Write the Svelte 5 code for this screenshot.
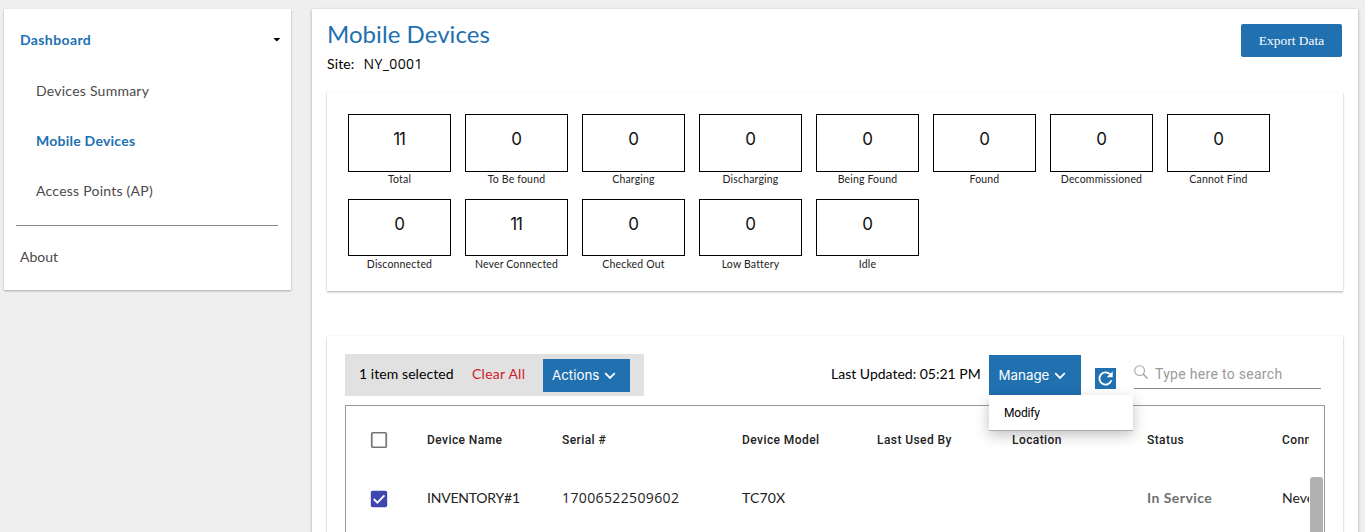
<script>
  const row1 = [['11', 'Total'], ['0', 'To Be found'], ['0', 'Charging'], ['0', 'Discharging'], ['0', 'Being Found'], ['0', 'Found'], ['0', 'Decommissioned'], ['0', 'Cannot Find']];
  const row2 = [['0', 'Disconnected'], ['11', 'Never Connected'], ['0', 'Checked Out'], ['0', 'Low Battery'], ['0', 'Idle']];
  const columns = ['Device Name', 'Serial #', 'Device Model', 'Last Used By', 'Location', 'Status', 'Connection'];
</script>

{#snippet chevron()}
  <svg width="12" height="8" viewBox="0 0 12 8"><path d="M1.2 1.2L6 5.9l4.8-4.7" fill="none" stroke="#fff" stroke-width="1.8" /></svg>
{/snippet}

<div class="page">
  <nav class="sidebar">
    <div class="item top active">Dashboard
      <svg width="8" height="4" viewBox="0 0 8 4"><path d="M0.3 0h7L3.8 3.5z" fill="#000" /></svg>
    </div>
    <div class="item sub">Devices Summary</div>
    <div class="item sub active">Mobile Devices</div>
    <div class="item sub">Access Points (AP)</div>
    <hr />
    <div class="item top about">About</div>
  </nav>

  <main>
    <header>
      <div>
        <h1>Mobile Devices</h1>
        <p class="site"><span class="k">Site:</span><span class="v">NY_0001</span></p>
      </div>
      <button class="export">Export Data</button>
    </header>

    <section class="card stats">
      {#each [row1, row2] as row, i}
        <div class="statrow" class:second={i === 1}>
          {#each row as [n, label]}
            <div class="stat"><div class="box"><span class:narrow={n === '11'}>{n}</span></div><div class="label">{label}</div></div>
          {/each}
        </div>
      {/each}
    </section>

    <section class="card devices">
      <div class="toolbar">
        <div class="selection">
          <span class="count">1 item selected</span>
          <span class="clear">Clear All</span>
          <button class="drop actions">Actions{@render chevron()}</button>
        </div>
        <span class="updated">Last Updated: 05:21 PM</span>
        <div class="manage">
          <button class="drop">Manage{@render chevron()}</button>
          <div class="menu">Modify</div>
        </div>
        <button class="refresh" aria-label="Refresh">
          <svg width="21" height="21" viewBox="0 0 21 21"><path d="M14.9 6.2A6.1 6.1 0 1 0 16.4 12.3" fill="none" stroke="#fff" stroke-width="1.9" /><path d="M17.7 3.3v6h-6z" fill="#fff" /></svg>
        </button>
        <div class="search">
          <svg width="15" height="15" viewBox="0 0 15 15" fill="none" stroke="#a8a8a8"><circle cx="5.6" cy="5.6" r="4.9" stroke-width="1.1" /><path d="M9.3 9.3l4.2 4.2" stroke-width="1.6" /></svg>
          <span>Type here to search</span>
        </div>
      </div>
      <div class="table">
        <div class="grid">
          <div class="tr head">
            <span class="cb"><svg width="18" height="18" viewBox="0 0 18 18"><rect x="1.75" y="1.75" width="14.5" height="14.5" rx="1" fill="none" stroke="#757575" stroke-width="1.7" /></svg></span>
            {#each columns as c}<span>{c}</span>{/each}
          </div>
          <div class="tr">
            <span class="cb"><svg width="18" height="18" viewBox="0 0 18 18"><rect x="0.8" y="0.8" width="16.4" height="16.4" rx="1.8" fill="#3f46ad" /><path d="M3.7 9l3.7 3.7 7-7.4" fill="none" stroke="#fff" stroke-width="1.8" /></svg></span>
            <span class="name">INVENTORY#1</span><span class="serial">17006522509602</span><span class="model">TC70X</span><span></span><span></span><span class="status">In Service</span><span>Never Connected</span>
          </div>
        </div>
        <div class="thumb"></div>
      </div>
    </section>
  </main>
</div>

<style>
  :global(body) { background: #efefef; overflow: hidden; }
  * { box-sizing: border-box; }
  button { border: 0; padding: 0; margin: 0; background: #2170b0; color: #fff; }
  .page { height: 532px; overflow: hidden; display: flex; align-items: flex-start; gap: 21px; padding: 9px 7px 0 4px; font-family: Lato, sans-serif; font-size: 14px; color: #000; }
  .sidebar { width: 287px; height: 281px; background: #fff; box-shadow: 0 1px 2px rgba(0,0,0,.3); padding-top: 6px; flex: none; }
  .item { display: flex; align-items: center; height: 50px; color: #4a4a4a; line-height: 20px; letter-spacing: .24px; }
  .item.top { padding: 0 10px 0 16px; justify-content: space-between; height: 51px; padding-bottom: 1px; letter-spacing: .38px; }
  .item.about { height: 50px; padding-bottom: 2px; letter-spacing: 0; }
  .item.sub { padding-left: 32px; }
  .item.active { color: #2170b0; font-weight: 700; }
  hr { border: 0; height: 1px; background: #888; margin: 9px 13px 7px 12px; }
  main { width: 1046px; height: 560px; background: #fff; box-shadow: 0 1px 3px rgba(0,0,0,.3); padding: 0 15px; flex: none; }
  header { display: flex; justify-content: space-between; height: 83px; padding-right: 1px; }
  h1 { margin: 9px 0 0; font-size: 24px; line-height: 32px; font-weight: 400; color: #2170b0; letter-spacing: .05px; }
  .site { margin: 4px 0 0; line-height: 20px; display: flex; gap: 9px; }
  .k { letter-spacing: .15px; }
  .v { font: 14px/20px "Open Sans", sans-serif; letter-spacing: .4px; }
  .export { width: 101px; height: 33px; margin-top: 15px; border-radius: 2px; font: 13.33px "Liberation Serif", serif; letter-spacing: .08px; }
  .card { background: #fff; box-shadow: 0 1px 2px rgba(0,0,0,.33); }
  .stats { height: 199px; padding: 22px 21px 0; }
  .statrow { display: flex; gap: 14px; height: 85px; }
  .stat { width: 103px; text-align: center; }
  .box { height: 58px; border: 1px solid #000; font: 17px/49px Inter, sans-serif; color: #111; }
  .narrow { letter-spacing: -1.2px; margin-right: 1px; }
  .second .box { height: 57px; }
  .label { font-size: 10.5px; line-height: 14px; color: #222; white-space: nowrap; letter-spacing: .17px; }
  .second .label { line-height: 16px; }
  .devices { margin-top: 45px; height: 230px; padding: 18px 18px 0; }
  .toolbar { display: flex; height: 42px; align-items: flex-start; }
  .selection { width: 299px; height: 42px; background: #e1e1e1; display: flex; align-items: center; padding-left: 14px; flex: none; }
  .count { width: 113px; letter-spacing: .07px; margin-top: -3px; }
  .clear { width: 71px; color: #d0202c; letter-spacing: .25px; margin-top: -3px; }
  .drop { display: flex; align-items: center; font: 13.33px Inter, sans-serif; }
  .drop svg { margin: 1px 0 0 5px; }
  .actions { width: 87px; height: 33px; padding-left: 9px; }
  .updated { width: 158px; margin-left: 187px; line-height: 40px; white-space: nowrap; flex: none; }
  .manage { position: relative; margin-top: 1px; flex: none; }
  .manage .drop { width: 92px; height: 40px; padding-left: 9.5px; }
  .menu { position: absolute; z-index: 2; left: 0; top: 40px; width: 144px; height: 35px; background: #fff; padding-left: 15px; font: 12px/36px Roboto, sans-serif; letter-spacing: -.2px; box-shadow: 0 1px 0 #aaa, 0 5px 14px rgba(0,0,0,.25); }
  .refresh { width: 21px; height: 21px; margin: 14px 18px 0 14px; flex: none; }
  .refresh svg { display: block; }
  .search { width: 187px; height: 35px; border-bottom: 1px solid #888; display: flex; padding-top: 11px; flex: none; }
  .search span { font: 14px/18px Roboto, sans-serif; color: #9a9a9a; margin-left: 6px; letter-spacing: .3px; }
  .table { width: 980px; height: 180px; margin-top: 9px; border: 1px solid #999; display: flex; align-items: flex-start; }
  .grid { width: 963px; overflow: hidden; flex: none; }
  .tr { display: grid; grid-template-columns: 57px 135px 180px 135px 135px 135px 135px 135px; padding-left: 24px; align-items: center; height: 51px; padding-bottom: 2px; color: #222; white-space: nowrap; }
  .head { height: 67px; padding-bottom: 0; font: 500 12px Roboto, sans-serif; letter-spacing: .42px; }
  .cb svg { display: block; position: relative; top: 1px; }
  .head .cb svg { top: 0; }
  .name { letter-spacing: -.22px; }
  .serial { font: 14px/18px "Open Sans", sans-serif; letter-spacing: .38px; }
  .model { letter-spacing: .15px; }
  .status { font-weight: 700; color: #707070; letter-spacing: .45px; }
  .thumb { width: 13px; height: 120px; margin: 71px 0 0 1px; background: #b1b1b1; border-radius: 3px 3px 0 0; }
</style>
